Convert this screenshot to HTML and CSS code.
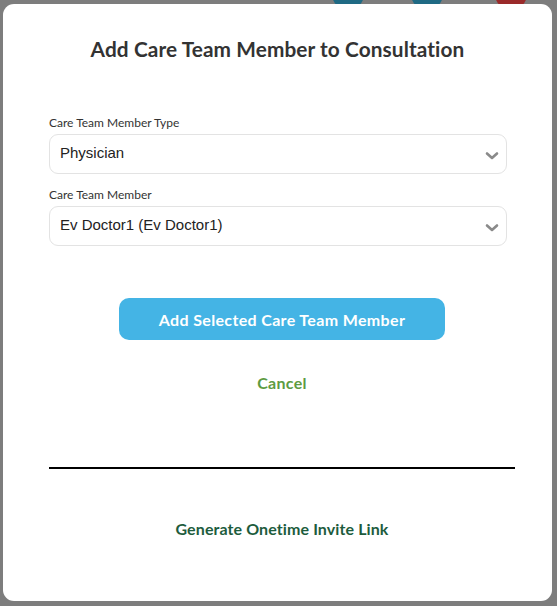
FILE: index.html
```html
<!DOCTYPE html>
<html>
<head>
<meta charset="utf-8">
<link rel="stylesheet" href="styles.css">
</head>
<body>
<div class="backdrop">
  <span class="dot dot-a"></span>
  <span class="dot dot-b"></span>
  <span class="dot dot-c"></span>
  <div class="modal">
    <h1 class="title">Add Care Team Member to Consultation</h1>
    <div class="field field-first">
      <label class="label">Care Team Member Type</label>
      <div class="select">
        <span class="select-text">Physician</span>
        <svg class="chev" width="14" height="10" viewBox="0 0 14 10"><path d="M2 2.5 L7 7 L12 2.5" fill="none" stroke="#8a8a8a" stroke-width="2.6" stroke-linecap="round" stroke-linejoin="round"/></svg>
      </div>
    </div>
    <div class="field">
      <label class="label">Care Team Member</label>
      <div class="select">
        <span class="select-text">Ev Doctor1 (Ev Doctor1)</span>
        <svg class="chev" width="14" height="10" viewBox="0 0 14 10"><path d="M2 2.5 L7 7 L12 2.5" fill="none" stroke="#8a8a8a" stroke-width="2.6" stroke-linecap="round" stroke-linejoin="round"/></svg>
      </div>
    </div>
    <div class="actions">
      <button class="primary">Add Selected Care Team Member</button>
      <a class="cancel">Cancel</a>
    </div>
    <hr class="divider">
    <a class="invite">Generate Onetime Invite Link</a>
  </div>
</div>
</body>
</html>
```
FILE: styles.css
```css
html, body {
  margin: 0;
  padding: 0;
}
body {
  width: 557px;
  height: 606px;
  overflow: hidden;
  background: #7d7d7d;
  font-family: "Lato", "Open Sans", sans-serif;
}
.backdrop {
  position: relative;
  width: 557px;
  height: 606px;
  box-sizing: border-box;
  padding: 4px 5px 5px 3px;
}
.dot {
  position: absolute;
  top: -22px;
  width: 32px;
  height: 32px;
  border-radius: 50%;
}
.dot-a { left: 332px; background: #1f6a84; }
.dot-b { left: 411px; background: #1f6a84; }
.dot-c { left: 495px; background: #9a2a2a; }
.modal {
  position: relative;
  background: #fff;
  border-radius: 11px;
  height: 597px;
  box-sizing: border-box;
  padding: 32px 37px 0 46px;
  display: flex;
  flex-direction: column;
}
.title {
  margin: 0 9px 0 0;
  text-align: center;
  font-size: 20.8px;
  line-height: 26px;
  font-weight: 700;
  color: #333;
  letter-spacing: 0.1px;
}
.field {
  display: flex;
  flex-direction: column;
  margin-right: 8px;
}
.field-first {
  margin-top: 54px;
}
.field + .field {
  margin-top: 14px;
}
.label {
  font-size: 12px;
  line-height: 14px;
  color: #333;
  margin-bottom: 4px;
}
.select {
  height: 40px;
  box-sizing: border-box;
  border: 1px solid #e3e3e3;
  border-radius: 9px;
  display: flex;
  align-items: center;
  justify-content: space-between;
  padding: 0 7px 3px 10px;
}
.select-text {
  font-family: "Liberation Sans", Arial, sans-serif;
  font-size: 15px;
  color: #222;
}
.chev {
  display: block;
  margin-top: 6px;
}
.actions {
  display: flex;
  flex-direction: column;
  align-items: center;
  margin-top: 52px;
}
.primary {
  width: 326px;
  height: 42px;
  border: none;
  border-radius: 10px;
  background: #44b4e5;
  color: #fff;
  font-family: "Lato", sans-serif;
  font-size: 16px;
  font-weight: 700;
  letter-spacing: 0.35px;
}
.cancel {
  margin-top: 34px;
  font-size: 16px;
  line-height: 18px;
  font-weight: 700;
  color: #5d9b42;
  letter-spacing: 0.3px;
}
.divider {
  margin: 75px 0 0 0;
  border: none;
  height: 2px;
  background: #000;
}
.invite {
  margin-top: 51px;
  text-align: center;
  font-size: 16px;
  line-height: 18px;
  font-weight: 700;
  color: #1d5c3d;
  letter-spacing: 0.1px;
}
```
